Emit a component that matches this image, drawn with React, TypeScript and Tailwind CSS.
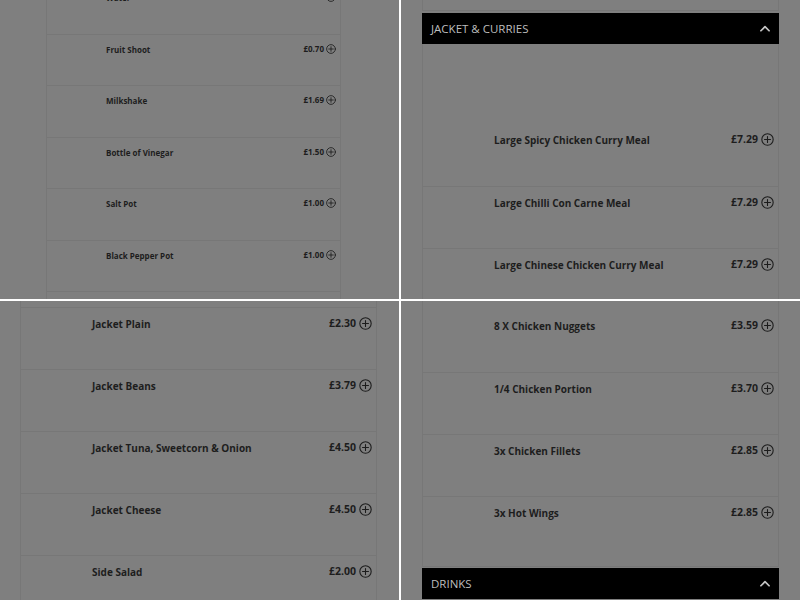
import { ReactNode } from 'react'

const font = { fontFamily: '"Open Sans", "Liberation Sans", sans-serif' }

function PlusCircle({ size }: { size: number }) {
  return (
    <svg width={size} height={size} viewBox="0 0 24 24" fill="none" stroke="#1c1c1c" strokeWidth="2" strokeLinecap="round">
      <circle cx="12" cy="12" r="10.5" />
      <path d="M12 6.5v11M6.5 12h11" />
    </svg>
  )
}

function ChevronUp() {
  return (
    <svg width="14" height="14" viewBox="0 0 24 24" fill="none" stroke="#c4c4c4" strokeWidth="3" strokeLinecap="round" strokeLinejoin="round">
      <path d="M5 15l7-7 7 7" />
    </svg>
  )
}

type Item = { name: string; price: string }

function Row({ item, small, last }: { item: Item; small?: boolean; last?: boolean }) {
  if (small) {
    return (
      <div className="h-[51.5px] border-t border-[#777777] flex items-start pt-[9px] pl-[59px] pr-[4px]">
        <span className="flex-1 text-[8px] font-bold text-[#1d1d1d]">{item.name}</span>
        <span className="flex items-center gap-[2px] -mt-[1px] text-[8px] font-bold text-[#1d1d1d]">
          {item.price}
          <PlusCircle size={10} />
        </span>
      </div>
    )
  }
  return (
    <div className={`${last ? 'h-[70px]' : 'h-[62px]'} border-t border-[#777777] flex items-start pt-[9px] pl-[71px] pr-[4px]`}>
      <span className="flex-1 text-[10px] font-bold text-[#1d1d1d]">{item.name}</span>
      <span className="flex items-center gap-[3px] -mt-[1px] text-[10.5px] font-bold text-[#1d1d1d]">
        {item.price}
        <PlusCircle size={13} />
      </span>
    </div>
  )
}

function Header({ title }: { title: string }) {
  return (
    <div className="h-[31px] bg-black flex items-center justify-between pl-[9px] pr-[7px]">
      <span className="text-[11.5px] text-[#bdbdbd]">{title}</span>
      <ChevronUp />
    </div>
  )
}

function Tile({ children }: { children: ReactNode }) {
  return <div className="h-[299px] bg-[#7f7f7f] overflow-hidden" style={font}>{children}</div>
}

export default function App() {
  const drinks: Item[] = [
    { name: 'Water', price: '£1.00' },
    { name: 'Fruit Shoot', price: '£0.70' },
    { name: 'Milkshake', price: '£1.69' },
    { name: 'Bottle of Vinegar', price: '£1.50' },
    { name: 'Salt Pot', price: '£1.00' },
    { name: 'Black Pepper Pot', price: '£1.00' },
  ]
  const curries: Item[] = [
    { name: 'Large Spicy Chicken Curry Meal', price: '£7.29' },
    { name: 'Large Chilli Con Carne Meal', price: '£7.29' },
    { name: 'Large Chinese Chicken Curry Meal', price: '£7.29' },
  ]
  const jackets: Item[] = [
    { name: 'Jacket Plain', price: '£2.30' },
    { name: 'Jacket Beans', price: '£3.79' },
    { name: 'Jacket Tuna, Sweetcorn & Onion', price: '£4.50' },
    { name: 'Jacket Cheese', price: '£4.50' },
    { name: 'Side Salad', price: '£2.00' },
  ]
  const chicken: Item[] = [
    { name: '8 X Chicken Nuggets', price: '£3.59' },
    { name: '1/4 Chicken Portion', price: '£3.70' },
    { name: '3x Chicken Fillets', price: '£2.85' },
    { name: '3x Hot Wings', price: '£2.85' },
  ]

  return (
    <div className="w-[800px] h-[600px] bg-white grid grid-cols-[399px_399px] grid-rows-[299px_299px] gap-[2px] overflow-hidden">
      {/* top left: drinks list, zoomed out */}
      <Tile>
        <div className="ml-[46px] w-[295px] -mt-[18px] border-x border-[#777777]">
          {drinks.map((d) => (
            <Row key={d.name} item={d} small />
          ))}
          <div className="h-[20px] border-t border-[#777777]" />
        </div>
      </Tile>

      {/* top right: jacket & curries header */}
      <Tile>
        <div className="ml-[21px] w-[357px]">
          <div className="h-[11px] border-x border-b border-[#777777]" />
          <div className="h-[2px]" />
          <Header title="JACKET & CURRIES" />
          <div className="border-x border-[#777777]">
            <div className="h-[80px]" />
            {curries.map((c, i) => (
              <div key={c.name} className={i === 0 ? '[&>div]:border-t-0' : ''}>
                <Row item={c} />
              </div>
            ))}
          </div>
        </div>
      </Tile>

      {/* bottom left: jackets */}
      <Tile>
        <div className="ml-[20px] w-[357px] border-x border-[#777777]">
          <div className="h-[6px]" />
          {jackets.map((j) => (
            <Row key={j.name} item={j} />
          ))}
        </div>
      </Tile>

      {/* bottom right: chicken + drinks header */}
      <Tile>
        <div className="ml-[21px] w-[357px]">
          <div className="border-x border-b border-[#777777]">
            <div className="h-[9px]" />
            {chicken.map((c, i) => (
              <div key={c.name} className={i === 0 ? '[&>div]:border-t-0' : ''}>
                <Row item={c} last={i === chicken.length - 1} />
              </div>
            ))}
          </div>
          <div className="h-[1px]" />
          <Header title="DRINKS" />
        </div>
      </Tile>
    </div>
  )
}
